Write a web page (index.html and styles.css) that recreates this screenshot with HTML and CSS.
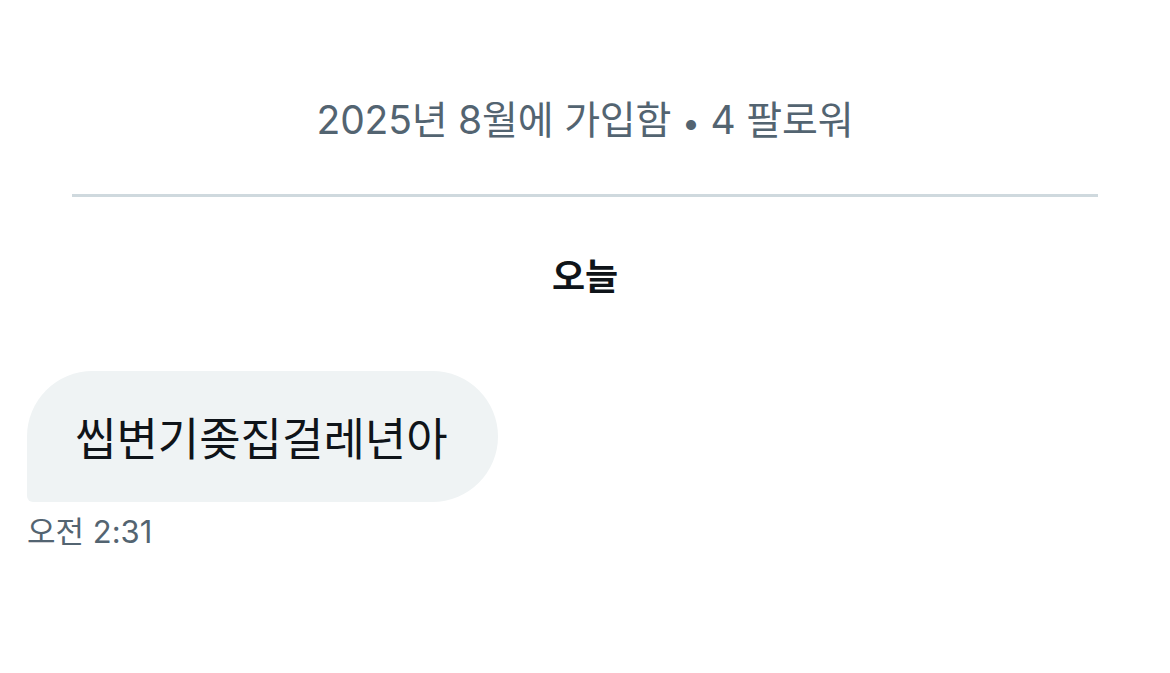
FILE: index.html
```html
<!DOCTYPE html>
<html lang="ko">
<head>
<meta charset="utf-8">
<link rel="stylesheet" href="styles.css">
</head>
<body>
<div class="page">
  <div class="joined">2025년 8월에 가입함 <span class="dot">•</span> 4 팔로워</div>
  <div class="divider"></div>
  <div class="day">오늘</div>
  <div class="msg">
    <div class="bubble">씹변기좆집걸레년아</div>
    <div class="time">오전 2:31</div>
  </div>
</div>
</body>
</html>
```

FILE: styles.css
```css
html, body {
  margin: 0;
  padding: 0;
  background: #ffffff;
}
body {
  font-family: Inter, "Noto Sans CJK KR", sans-serif;
  color: #0f1419;
}
.page {
  width: 1170px;
  height: 673px;
  display: flex;
  flex-direction: column;
}
.joined {
  margin-top: 96px;
  height: 48px;
  text-align: center;
  font-size: 39px;
  line-height: 48px;
  color: #536471;
  letter-spacing: -0.2px;
}
.dot {
  font-size: 32px;
  line-height: 1;
}
.divider {
  margin: 50px 72px 0 72px;
  height: 3px;
  background: #cfd9de;
}
.day {
  margin-top: 56px;
  text-align: center;
  font-size: 36px;
  font-weight: 700;
  line-height: 48px;
  color: #0f1419;
}
.msg {
  margin-top: 70px;
  padding-left: 27px;
  display: flex;
  flex-direction: column;
  align-items: flex-start;
}
.bubble {
  background: #eff3f4;
  border-radius: 66px 66px 66px 6px;
  height: 131px;
  box-sizing: border-box;
  padding: 0 50px 0 48px;
  display: flex;
  align-items: center;
  font-size: 45px;
  color: #0f1419;
}
.time {
  margin-top: 10px;
  font-size: 31px;
  line-height: 40px;
  color: #536471;
}
```
